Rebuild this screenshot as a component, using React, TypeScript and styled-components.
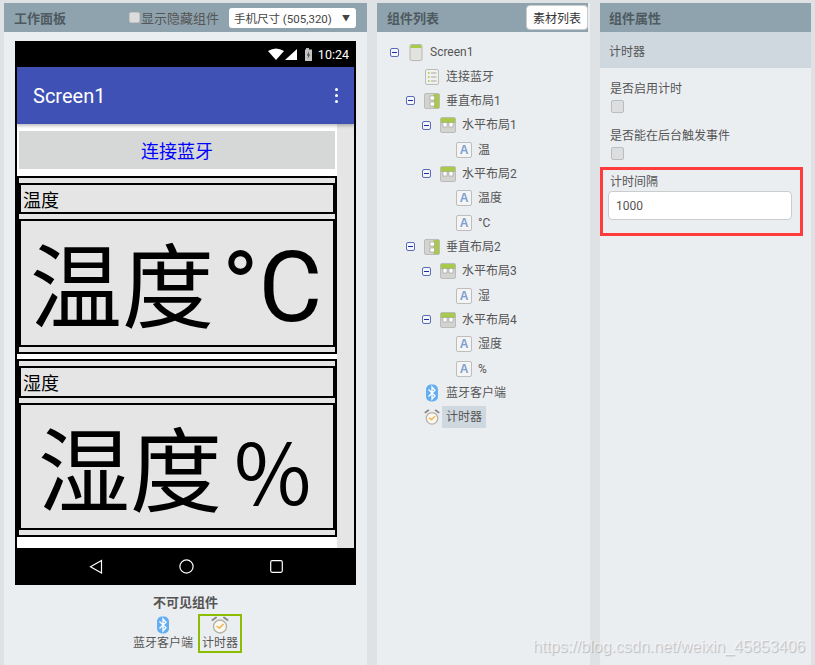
import React from 'react';
import styled, { createGlobalStyle } from 'styled-components';

const cjk = `Roboto, "Noto Sans CJK SC", "Liberation Sans", sans-serif`;

type TreeNode = {
  label: string,
  icon: 'form' | 'list' | 'vbox' | 'hbox' | 'text' | 'bluetooth' | 'clock',
  level: number,
  toggle?: boolean,
  selected?: boolean
}

const tree: TreeNode[] = [
  { label: 'Screen1', icon: 'form', level: 0, toggle: true },
  { label: '连接蓝牙', icon: 'list', level: 1 },
  { label: '垂直布局1', icon: 'vbox', level: 1, toggle: true },
  { label: '水平布局1', icon: 'hbox', level: 2, toggle: true },
  { label: '温', icon: 'text', level: 3 },
  { label: '水平布局2', icon: 'hbox', level: 2, toggle: true },
  { label: '温度', icon: 'text', level: 3 },
  { label: '°C', icon: 'text', level: 3 },
  { label: '垂直布局2', icon: 'vbox', level: 1, toggle: true },
  { label: '水平布局3', icon: 'hbox', level: 2, toggle: true },
  { label: '湿', icon: 'text', level: 3 },
  { label: '水平布局4', icon: 'hbox', level: 2, toggle: true },
  { label: '湿度', icon: 'text', level: 3 },
  { label: '%', icon: 'text', level: 3 },
  { label: '蓝牙客户端', icon: 'bluetooth', level: 1 },
  { label: '计时器', icon: 'clock', level: 1, selected: true },
];

const BluetoothIcon = () => (
  <svg width="14" height="18" viewBox="0 0 14 18">
    <rect x="1" y="0.5" width="12" height="17" rx="5" fill="#63aef2" />
    <path d="M3.5 5.5 L10 11.8 L7 15 V3 L10 6.2 L3.5 12.5" fill="none" stroke="#fff" strokeWidth="1.3" />
  </svg>
);

const ClockIcon = () => (
  <svg width="18" height="18" viewBox="0 0 18 18">
    <path d="M1.5 4 L5 1.5 M16.5 4 L13 1.5" stroke="#8a8a8a" strokeWidth="2" strokeLinecap="round" />
    <circle cx="9" cy="10.5" r="6.5" fill="#fbf8ef" stroke="#b5b2a8" strokeWidth="1.4" />
    <path d="M5.5 10 L8.5 12 L12.5 8" fill="none" stroke="#f0b04e" strokeWidth="1.5" />
  </svg>
);

const FormIcon = () => (
  <svg width="14" height="17" viewBox="0 0 14 17">
    <rect x="1" y="0.5" width="12" height="16" rx="1.5" fill="#e2e2de" stroke="#b8b8b8" />
    <rect x="1.5" y="1" width="11" height="3" fill="#a9c94a" />
  </svg>
);

const ListIcon = () => (
  <svg width="14" height="16" viewBox="0 0 14 16">
    <rect x="0.5" y="0.5" width="13" height="15" rx="1.5" fill="#f1f2ec" stroke="#bcbcbc" />
    <path d="M3 4h1.5M3 8h1.5M3 12h1.5" stroke="#9cc23c" strokeWidth="1.5" />
    <path d="M6 4h5.5M6 8h5.5M6 12h5.5" stroke="#a5a5a5" strokeWidth="1.2" />
  </svg>
);

const VBoxIcon = () => (
  <svg width="16" height="16" viewBox="0 0 16 16">
    <rect x="0.5" y="0.5" width="15" height="15" rx="1.5" fill="#d3d3d0" stroke="#bbb" />
    <rect x="9.5" y="1" width="5.5" height="14" fill="#a9c94a" />
    <rect x="6" y="3" width="4.5" height="4" fill="#fff" stroke="#999" strokeWidth="0.6" />
    <rect x="6" y="9" width="4.5" height="4" fill="#fff" stroke="#999" strokeWidth="0.6" />
  </svg>
);

const HBoxIcon = () => (
  <svg width="16" height="16" viewBox="0 0 16 16">
    <rect x="0.5" y="0.5" width="15" height="15" rx="1.5" fill="#d3d3d0" stroke="#bbb" />
    <rect x="1" y="1" width="14" height="5" fill="#a9c94a" />
    <rect x="3" y="5.5" width="4" height="4.5" fill="#fff" stroke="#999" strokeWidth="0.6" />
    <rect x="9" y="5.5" width="4" height="4.5" fill="#fff" stroke="#999" strokeWidth="0.6" />
  </svg>
);

const TreeIcon = ({ kind }: { kind: TreeNode['icon'] }) => {
  switch (kind) {
    case 'form': return <FormIcon />;
    case 'list': return <ListIcon />;
    case 'vbox': return <VBoxIcon />;
    case 'hbox': return <HBoxIcon />;
    case 'text': return <TextIcon>A</TextIcon>;
    case 'bluetooth': return <BluetoothIcon />;
    default: return <ClockIcon />;
  }
};

export default function App() {
  return (
    <>
      <GlobalStyle />
      <Page>
        <WorkPanel>
          <Header>
            <Title>工作面板</Title>
            <HiddenToggle><FakeCheck />显示隐藏组件</HiddenToggle>
            <SizeSelect>手机尺寸 (505,320)<Caret>▼</Caret></SizeSelect>
          </Header>
          <Phone>
            <StatusBar>
              <svg width="44" height="15" viewBox="0 0 44 15">
                <path d="M0 4 Q8 -1 16 4 L8 13 Z" fill="#fff" />
                <path d="M17 13 L29 2 V13 Z" fill="#fff" />
                <rect x="38" y="1" width="3" height="2" fill="#bbb" />
                <rect x="37" y="2.5" width="7" height="11.5" fill="#c4c4c4" />
                <path d="M41 4 L38.8 8.5 H40.4 L39.6 12 L42.2 7.5 H40.6 Z" fill="#444" />
              </svg>
              <Time>10:24</Time>
            </StatusBar>
            <AppBar>
              Screen1
              <Dots><i /><i /><i /></Dots>
            </AppBar>
            <PhoneBody>
              <Screen>
                <ConnectButton>连接蓝牙</ConnectButton>
                <VLayout>
                  <LabelRow $height={31}>温度</LabelRow>
                  <BigRow $height={128} $left={9}>温度<DegreeUnit>°C</DegreeUnit></BigRow>
                </VLayout>
                <VLayout>
                  <LabelRow $height={32}>湿度</LabelRow>
                  <BigRow $height={127} $left={17}>湿度<PercentUnit>%</PercentUnit></BigRow>
                </VLayout>
              </Screen>
              <Scrollbar />
            </PhoneBody>
            <NavBar>
              <svg width="14" height="16" viewBox="0 0 14 16">
                <path d="M12.5 1.5 V14 L1.5 7.8 Z" fill="none" stroke="#fff" strokeWidth="1.2" />
              </svg>
              <svg width="15" height="15" viewBox="0 0 15 15">
                <circle cx="7.5" cy="7.5" r="6.6" fill="none" stroke="#fff" strokeWidth="1.2" />
              </svg>
              <svg width="13" height="13" viewBox="0 0 13 13">
                <rect x="0.7" y="0.7" width="11.6" height="11.6" rx="1.5" fill="none" stroke="#fff" strokeWidth="1.2" />
              </svg>
            </NavBar>
          </Phone>
          <HiddenTitle>不可见组件</HiddenTitle>
          <HiddenList>
            <HiddenItem><BluetoothIcon />蓝牙客户端</HiddenItem>
            <HiddenItem $selected><ClockIcon />计时器</HiddenItem>
          </HiddenList>
        </WorkPanel>

        <TreePanel>
          <TreeHeader>
            <Title>组件列表</Title>
            <AssetButton>素材列表</AssetButton>
          </TreeHeader>
          <Tree>
            {tree.map(node => (
              <TreeRow key={node.label + node.level} $level={node.level}>
                <Toggle $visible={!!node.toggle} />
                <IconSlot><TreeIcon kind={node.icon} /></IconSlot>
                <NodeLabel $selected={node.selected}>{node.label}</NodeLabel>
              </TreeRow>
            ))}
          </Tree>
        </TreePanel>

        <PropsPanel>
          <PropsHeader>
            <Title>组件属性</Title>
          </PropsHeader>
          <SubHeader>计时器</SubHeader>
          <PropList>
            <PropLabel>是否启用计时</PropLabel>
            <FormCheck />
            <PropLabel>是否能在后台触发事件</PropLabel>
            <FormCheck />
            <Highlight>
              <PropLabel>计时间隔</PropLabel>
              <ValueInput>1000</ValueInput>
            </Highlight>
          </PropList>
        </PropsPanel>
        <Watermark>https://blog.csdn.net/weixin_45853406</Watermark>
      </Page>
    </>
  );
}

const GlobalStyle = createGlobalStyle`
  html, body {
    margin: 0;
    padding: 0;
    background: #dfe2e4;
  }
  * {
    box-sizing: border-box;
  }
`
const Page = styled.div`
  position: relative;
  display: flex;
  gap: 10px;
  width: 815px;
  height: 665px;
  padding: 3px 4px 0;
  overflow: hidden;
  font-family: ${cjk};
  font-size: 12px;
  color: #555;
`
const Panel = styled.section`
  display: flex;
  flex-direction: column;
  background: #ebeef1;
`
const WorkPanel = styled(Panel)`
  width: 363px;
`
const TreePanel = styled(Panel)`
  width: 213px;
`
const PropsPanel = styled(Panel)`
  width: 211px;
`
const Header = styled.header`
  display: flex;
  align-items: center;
  height: 29px;
  flex: none;
  padding: 0 11px 0 10px;
  background: #8ea3ad;
`
const TreeHeader = styled(Header)`
  margin-right: 2px;
`
const PropsHeader = styled(Header)`
  padding-left: 9px;
`
const Title = styled.h2`
  margin: 0;
  font-size: 13px;
  font-weight: 700;
  color: #4f5a60;
`
const HiddenToggle = styled.label`
  display: flex;
  align-items: center;
  margin-left: auto;
  font-size: 13px;
  color: #555;
`
const FakeCheck = styled.span`
  width: 11px;
  height: 11px;
  margin-right: 1px;
  background: #dcdcdc;
  border: 1px solid #c4c4c4;
  border-radius: 2px;
`
const SizeSelect = styled.div`
  display: flex;
  align-items: center;
  justify-content: space-between;
  width: 127px;
  height: 20px;
  margin-left: 10px;
  padding: 0 6px 0 5px;
  background: #fff;
  border-radius: 3px;
  font-size: 11.5px;
  white-space: nowrap;
  color: #444;
`
const Caret = styled.span`
  font-size: 8px;
  color: #444;
`
const Phone = styled.div`
  display: flex;
  flex-direction: column;
  width: 341px;
  height: 544px;
  margin: 9px 0 0 11px;
  padding: 0 2px;
  background: #000;
`
const StatusBar = styled.div`
  display: flex;
  align-items: center;
  justify-content: flex-end;
  gap: 6px;
  height: 26px;
  flex: none;
  padding-right: 5px;
`
const Time = styled.span`
  font-size: 12.5px;
  color: #fff;
`
const AppBar = styled.div`
  position: relative;
  z-index: 1;
  display: flex;
  align-items: center;
  justify-content: space-between;
  height: 57px;
  flex: none;
  padding: 0 16px;
  background: #3f51b5;
  box-shadow: 0 2px 3px rgba(0, 0, 0, 0.25);
  font-size: 20px;
  color: #fff;
`
const Dots = styled.div`
  display: flex;
  flex-direction: column;
  gap: 3px;
  i {
    display: block;
    width: 3px;
    height: 3px;
    background: #fff;
    border-radius: 50%;
  }
`
const PhoneBody = styled.div`
  display: flex;
  flex: 1;
`
const Screen = styled.div`
  display: flex;
  flex-direction: column;
  gap: 5px;
  width: 320px;
  padding-top: 7px;
  background: #fff;
`
const Scrollbar = styled.div`
  flex: 1;
  background: #e5e5e5;
`
const ConnectButton = styled.div`
  display: flex;
  align-items: center;
  justify-content: center;
  height: 38px;
  margin: 0 2px 2px;
  background: #d5d8d6;
  font-size: 18px;
  color: #0000ff;
`
const VLayout = styled.div`
  display: flex;
  flex-direction: column;
  gap: 5px;
  padding: 5px 0;
  background: #e5e5e5;
  border: 2px solid #000;
`
const LabelRow = styled.div<{ $height: number }>`
  display: flex;
  align-items: center;
  height: ${p => p.$height}px;
  padding-left: 2px;
  background: #e5e5e5;
  border: 2px solid #000;
  font-size: 18px;
  color: #000;
`
const BigRow = styled(LabelRow)<{ $left: number }>`
  display: block;
  padding: 23px 0 0 ${p => p.$left}px;
  font-size: 92px;
  line-height: 92px;
  white-space: nowrap;
  overflow: hidden;
`
const DegreeUnit = styled.span`
  margin-left: 8px;
  font-size: 98px;
  line-height: 0;
`
const PercentUnit = styled.span`
  margin-left: 12px;
  font-family: "Noto Sans CJK SC", sans-serif;
  font-size: 84px;
  line-height: 0;
`
const NavBar = styled.div`
  display: flex;
  align-items: center;
  justify-content: space-between;
  height: 37px;
  flex: none;
  padding: 0 71px 0 72px;
`
const HiddenTitle = styled.div`
  margin-top: 7px;
  text-align: center;
  font-size: 13px;
  font-weight: 700;
  color: #555;
`
const HiddenList = styled.div`
  display: flex;
  justify-content: center;
  gap: 1px;
  margin-top: 3px;
`
const HiddenItem = styled.div<{ $selected?: boolean }>`
  display: flex;
  flex-direction: column;
  align-items: center;
  gap: 1px;
  height: 39px;
  padding: 0 2px;
  border: 2px solid ${p => (p.$selected ? '#8cbd00' : 'transparent')};
  line-height: 16px;
  svg {
    flex: none;
  }
`
const AssetButton = styled.button`
  width: 62px;
  height: 25px;
  margin-left: auto;
  margin-right: -11px;
  padding: 0;
  background: #fff;
  border: 1px solid #ccc;
  border-radius: 4px;
  font-family: ${cjk};
  font-size: 12px;
  color: #333;
`
const Tree = styled.div`
  display: flex;
  flex-direction: column;
  padding-top: 8px;
`
const TreeRow = styled.div<{ $level: number }>`
  display: flex;
  align-items: center;
  height: 24.35px;
  padding-left: ${p => 13 + p.$level * 16}px;
`
const Toggle = styled.span<{ $visible: boolean }>`
  position: relative;
  width: 9px;
  height: 9px;
  flex: none;
  border: 1px solid ${p => (p.$visible ? '#5a6cb8' : 'transparent')};
  border-radius: 2px;
  background: ${p => (p.$visible ? '#f4f6fb' : 'transparent')};
  &::after {
    content: '';
    display: ${p => (p.$visible ? 'block' : 'none')};
    position: absolute;
    left: 1px;
    right: 1px;
    top: 3px;
    height: 1px;
    background: #1a2fa0;
  }
`
const IconSlot = styled.span`
  display: flex;
  align-items: center;
  justify-content: center;
  width: 16px;
  height: 18px;
  margin-left: 9px;
  flex: none;
`
const TextIcon = styled.span`
  display: flex;
  align-items: center;
  justify-content: center;
  width: 16px;
  height: 16px;
  background: #f4f5f3;
  border: 1px solid #bdbdbd;
  border-radius: 2px;
  font-family: "Liberation Sans", sans-serif;
  font-size: 12px;
  font-weight: 700;
  color: #7e9fd4;
`
const NodeLabel = styled.span<{ $selected?: boolean }>`
  margin-left: ${p => (p.$selected ? 2 : 6)}px;
  padding: ${p => (p.$selected ? '2px 4px' : '0')};
  background: ${p => (p.$selected ? '#cfd8df' : 'transparent')};
  line-height: 18px;
  color: #555;
`
const SubHeader = styled.div`
  display: flex;
  align-items: center;
  height: 36px;
  padding-left: 9px;
  background: #cfd8df;
  font-size: 12px;
  color: #555;
`
const PropList = styled.div`
  display: flex;
  flex-direction: column;
  align-items: flex-start;
  padding: 12px 0 0;
`
const PropLabel = styled.div`
  height: 18px;
  padding-left: 10px;
  line-height: 18px;
  color: #555;
`
const FormCheck = styled.span`
  width: 13px;
  height: 13px;
  margin: 2px 0 14px 11px;
  background: #dcdee0;
  border: 1px solid #bcbcbc;
  border-radius: 2px;
`
const Highlight = styled.div`
  width: 203px;
  height: 69px;
  margin-top: -7px;
  padding: 3px 0 0;
  border: 3px solid #ff3b3b;
  ${PropLabel} {
    padding-left: 7px;
  }
`
const ValueInput = styled.div`
  display: flex;
  align-items: center;
  width: 184px;
  height: 29px;
  margin: 0 0 0 5px;
  padding-left: 7px;
  background: #fff;
  border: 1px solid #ccc;
  border-radius: 4px;
  color: #555;
`
const Watermark = styled.div`
  position: absolute;
  right: 10px;
  bottom: 9px;
  font-family: "Liberation Sans", sans-serif;
  font-size: 16px;
  color: rgba(255, 255, 255, 0.55);
  text-shadow: 1px 1px 1px rgba(0, 0, 0, 0.22);
`
